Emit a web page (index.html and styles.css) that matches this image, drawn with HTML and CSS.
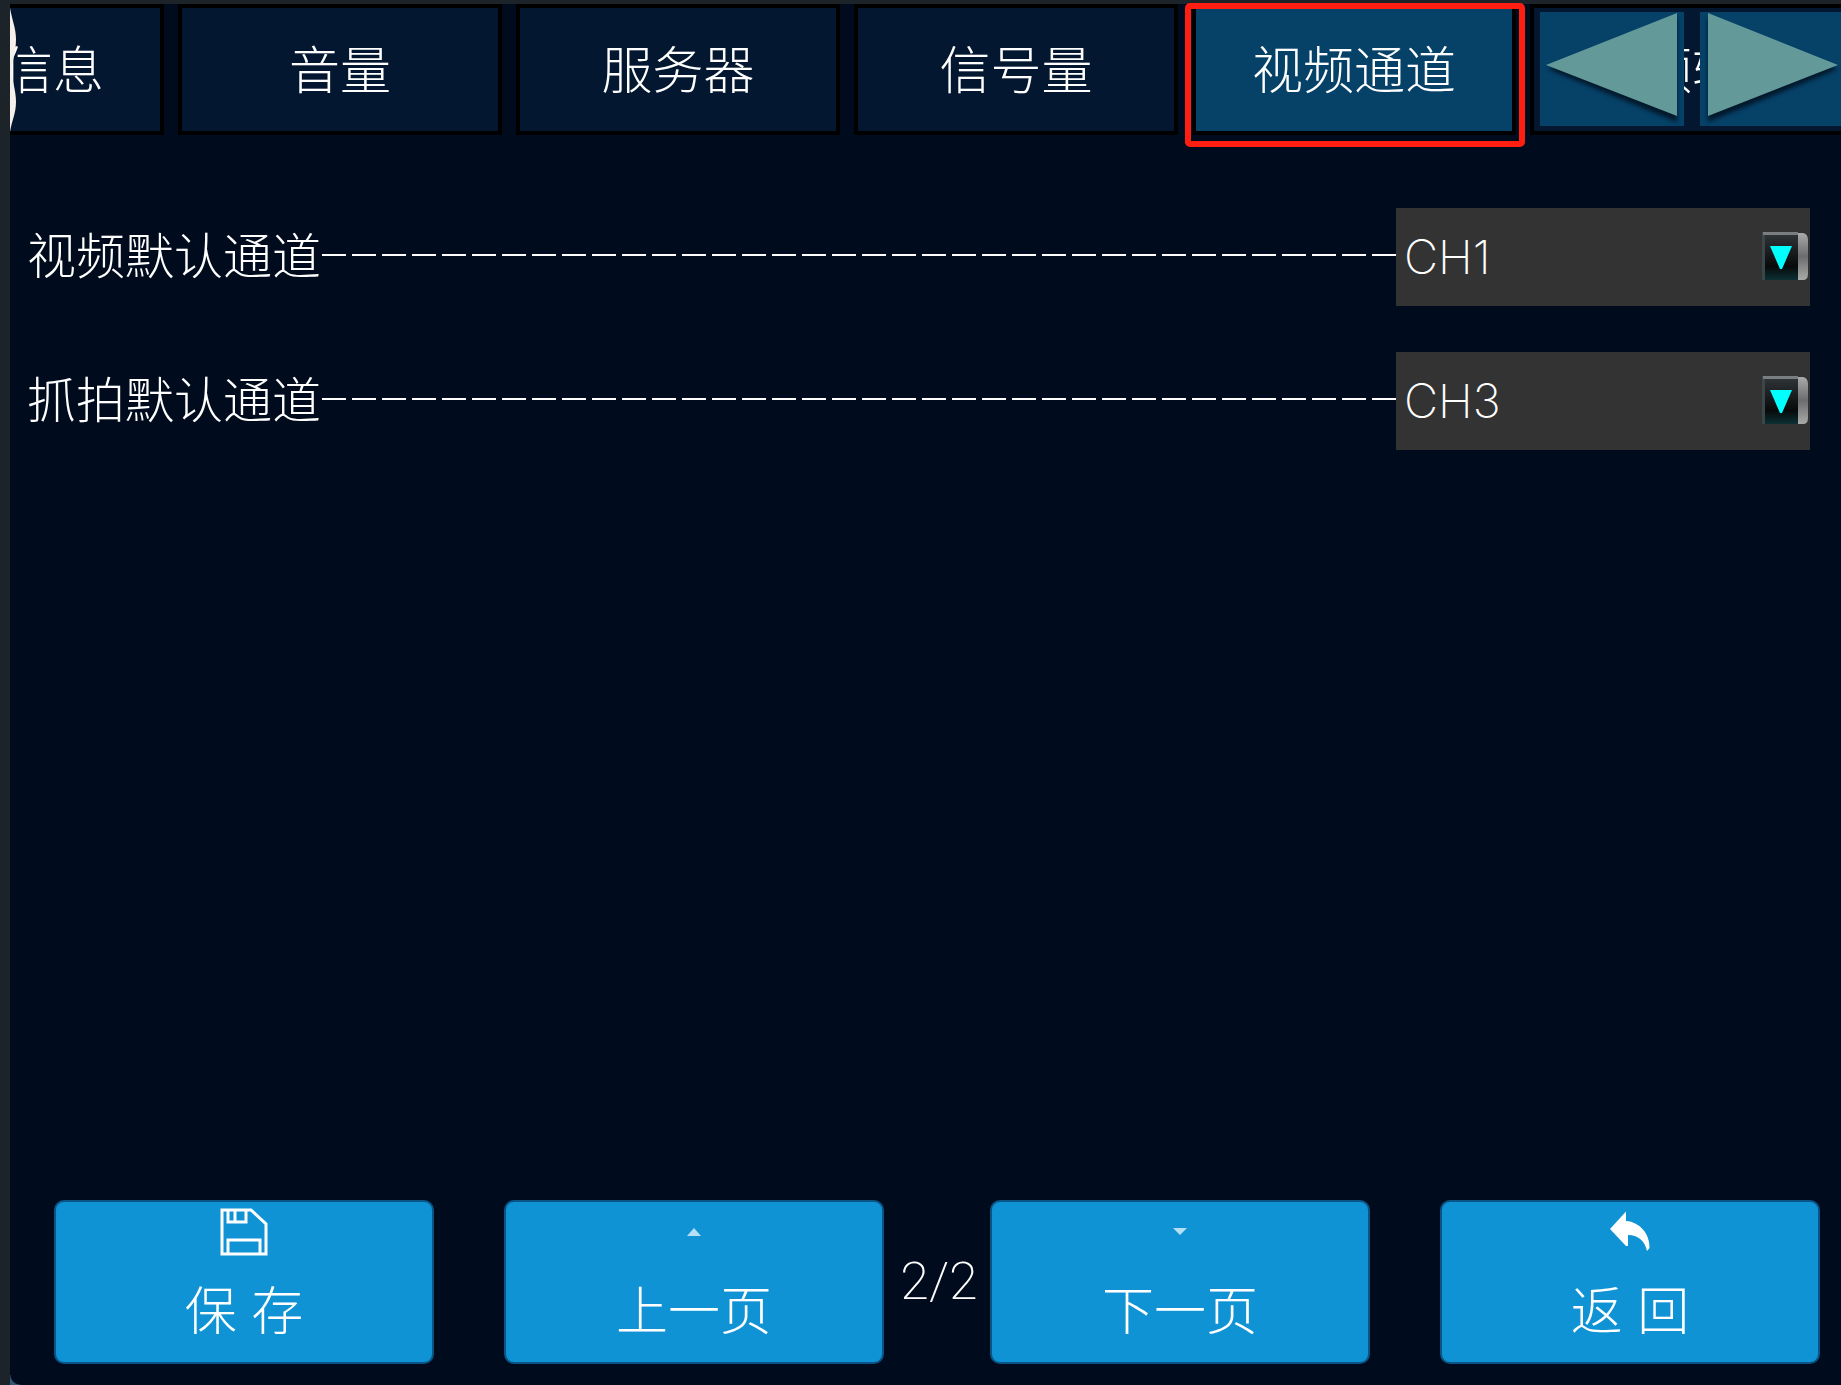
FILE: index.html
```html
<!DOCTYPE html>
<html lang="zh-CN">
<head>
<meta charset="utf-8">
<title>视频通道</title>
<link rel="stylesheet" href="styles.css">
</head>
<body>
<div class="screen">
  <nav class="tabs">
    <div class="strip">
      <button class="tab" type="button">信息</button>
      <button class="tab" type="button">音量</button>
      <button class="tab" type="button">服务器</button>
      <button class="tab" type="button">信号量</button>
      <button class="tab active" type="button">视频通道</button>
      <button class="tab" type="button">视频轮询</button>
    </div>
    <svg class="edge" viewBox="0 0 8 124" aria-hidden="true"><path d="M0 0C2 12 6 20 6 31C6 44 2 52 2 62C2 74 6 82 6 94C6 105 2 112 0 124Z" fill="#f4f0ec"/></svg>
    <div class="scroll">
      <button class="arrow" type="button" aria-label="向左"><svg viewBox="0 0 144 114"><path class="shade" d="M8 57L137 6V110Z"/><path d="M6 53L137 1V104Z"/></svg></button>
      <button class="arrow" type="button" aria-label="向右"><svg viewBox="0 0 144 114"><path class="shade" d="M8 6V110L138 57Z"/><path d="M8 1V104L138 53Z"/></svg></button>
    </div>
  </nav>
  <main class="form">
    <div class="row">
      <label for="video">视频默认通道</label>
      <span class="leader"></span>
      <div class="field">
        <select id="video"><option>CH1</option><option>CH2</option><option>CH3</option></select>
        <svg class="drop" viewBox="0 0 46 48" aria-hidden="true"><use href="#drop"/></svg>
      </div>
    </div>
    <div class="row">
      <label for="snap">抓拍默认通道</label>
      <span class="leader"></span>
      <div class="field">
        <select id="snap"><option>CH1</option><option>CH2</option><option selected>CH3</option></select>
        <svg class="drop" viewBox="0 0 46 48" aria-hidden="true"><use href="#drop"/></svg>
      </div>
    </div>
  </main>
  <footer class="actions">
    <button class="action" type="button">
      <svg viewBox="0 0 48 48"><path d="M2 2H31L46 16V46H2ZM8 2V14H26V2M15 2V14M8 46V32H40V46" fill="none" stroke="#fff" stroke-width="3"/></svg>
      <span>保 存</span>
    </button>
    <div class="pager">
      <button class="action" type="button">
        <svg viewBox="0 0 48 48"><path d="M17 28L24 20L31 28Z" fill="#b4dff5"/></svg>
        <span>上一页</span>
      </button>
      <span class="page">2/2</span>
      <button class="action" type="button">
        <svg viewBox="0 0 48 48"><path d="M17 20H31L24 27Z" fill="#b4dff5"/></svg>
        <span>下一页</span>
      </button>
    </div>
    <button class="action" type="button">
      <svg viewBox="0 0 48 48"><path d="M4 21L20 3.500V13C34 14 44 26 43.500 40L41 43C39 33 32 27 22 27V38H20Z" fill="#fff"/></svg>
      <span>返 回</span>
    </button>
  </footer>
</div>
<svg class="defs" aria-hidden="true">
  <defs>
    <linearGradient id="face" x1="0" y1="0" x2="0" y2="1"><stop offset="0" stop-color="#2e3336"/><stop offset=".7" stop-color="#080a0a"/><stop offset="1" stop-color="#0c3034"/></linearGradient>
    <linearGradient id="rim" x1="0" y1="0" x2="0" y2="1"><stop offset="0" stop-color="#aaa"/><stop offset=".5" stop-color="#6c6c6e"/><stop offset="1" stop-color="#aaa"/></linearGradient>
    <g id="drop">
      <path d="M36 1H41Q46 2 46 8V42Q46 48 41 48H36Z" fill="url(#rim)"/>
      <path d="M0 0H36V48H0Z" fill="#3a4648"/>
      <path d="M1 0H36V3H1Z" fill="#7a7e7e"/>
      <path d="M3 3H36V48H3Z" fill="url(#face)"/>
      <path d="M8 14H30L20 37H18Z" fill="#00ffff"/>
    </g>
  </defs>
</svg>
</body>
</html>
```
FILE: styles.css
```css
* { box-sizing: border-box; }
body {
  margin: 0;
  background: #1c2329;
  color: #fff;
  font-family: "Inter", "Noto Sans CJK SC", sans-serif;
  font-weight: 300;
}
button, select { font: inherit; color: inherit; margin: 0; }
.defs { position: absolute; width: 0; height: 0; }
.screen {
  display: flex;
  flex-direction: column;
  min-height: calc(100vh - 4px);
  margin: 4px 0 0 10px;
  background:
    radial-gradient(circle at 100% 0, transparent 9px, #2f5577 10px) 0 100% / 10px 10px no-repeat,
    #000c1d;
}
.tabs { position: relative; }
.strip {
  display: flex;
  gap: 14px;
  overflow-x: clip;
}
.tab {
  flex: none;
  width: 324px;
  height: 131px;
  padding: 0 0 6px;
  border: 4px solid #000;
  background: #031830;
  font-size: 51px;
}
.tab:first-child { margin-left: -170px; padding-left: 102px; }
.tab.active {
  position: relative;
  background: #064168;
}
.tab.active::after {
  content: "";
  position: absolute;
  inset: -5px -13px -16px -11px;
  border: 6px solid #ff1e10;
  border-radius: 5px;
}
.edge {
  position: absolute;
  left: 0;
  top: 4px;
  width: 8px;
  height: 124px;
}
.scroll {
  position: absolute;
  right: -3px;
  top: 8px;
  display: flex;
  gap: 16px;
}
.arrow {
  width: 144px;
  height: 114px;
  padding: 0;
  border: 0;
  background: #064168;
}
.arrow svg { display: block; fill: #639999; }
.arrow .shade { fill: #02182a; filter: blur(2px); }
.form {
  display: flex;
  flex-direction: column;
  gap: 46px;
  padding: 73px 31px 0 17px;
}
.row {
  display: flex;
  align-items: center;
}
.row label { font-size: 49px; line-height: 60px; }
.leader {
  flex: 1;
  height: 2px;
  margin: 0 0 4px 1px;
  background: repeating-linear-gradient(90deg, #fff 0 24px, transparent 24px 30px);
}
.field { position: relative; }
.field select {
  appearance: none;
  display: block;
  width: 414px;
  height: 98px;
  padding: 0 60px 2px 8px;
  border: 0;
  border-radius: 0;
  background: #333;
  font-size: 47px;
  font-weight: 200;
}
.drop {
  position: absolute;
  right: 2px;
  top: 24px;
  width: 46px;
  height: 48px;
  pointer-events: none;
}
.actions {
  display: flex;
  align-items: center;
  justify-content: space-between;
  gap: 10px;
  margin-top: auto;
  padding: 0 21px 21px 44px;
}
.pager { display: flex; align-items: center; }
.action {
  display: flex;
  flex-direction: column;
  align-items: center;
  width: 380px;
  height: 164px;
  padding: 6px 0 0;
  border: 2px solid #0a5585;
  border-radius: 10px;
  background: #0f93d5;
  font-size: 52px;
  line-height: 60px;
}
.action svg { flex: none; width: 48px; height: 48px; margin-bottom: 26px; }
.page {
  width: 106px;
  padding: 0 0 2px 4px;
  text-align: center;
  font-family: Roboto, sans-serif;
  font-size: 52px;
  font-weight: 200;
}
```
